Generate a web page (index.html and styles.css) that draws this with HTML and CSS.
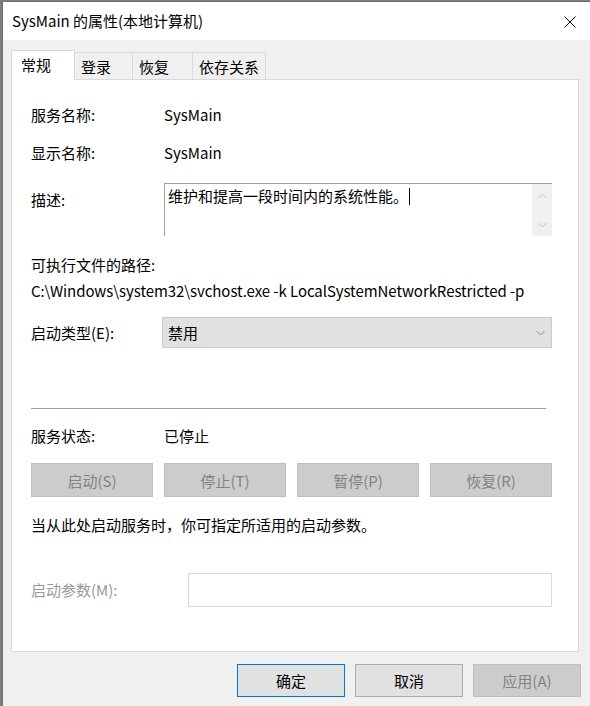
FILE: index.html
```html
<!DOCTYPE html>
<html lang="zh-CN">
<head>
  <meta charset="UTF-8">
  <title>SysMain 的属性(本地计算机)</title>
  <link rel="stylesheet" href="styles.css">
</head>
<body>
  <div class="window">
    <div class="titlebar">
      <span class="title">SysMain 的属性(本地计算机)</span>
      <svg class="close" width="12" height="12" viewBox="0 0 12 12">
        <path d="M0.5 0.5 L11.5 11.5 M11.5 0.5 L0.5 11.5" stroke="#000" stroke-width="1" fill="none"/>
      </svg>
    </div>

    <div class="content">
      <div class="tabs">
        <div class="tab active">常规</div>
        <div class="tab t2">登录</div>
        <div class="tab t3">恢复</div>
        <div class="tab t4">依存关系</div>
      </div>

      <div class="panel">
        <div class="row">
          <span class="label">服务名称:</span>
          <span>SysMain</span>
        </div>
        <div class="row r-display">
          <span class="label">显示名称:</span>
          <span>SysMain</span>
        </div>
        <div class="row r-desc">
          <span class="label desc-label">描述:</span>
          <div class="textbox">
            <div class="textbox-text">维护和提高一段时间内的系统性能。<span class="caret"></span></div>
            <div class="scroll">
              <svg width="9" height="6" viewBox="0 0 9 6"><path d="M0.5 5 L4.5 1 L8.5 5" stroke="#c2c2c2" fill="none"/></svg>
              <svg width="9" height="6" viewBox="0 0 9 6"><path d="M0.5 1 L4.5 5 L8.5 1" stroke="#c2c2c2" fill="none"/></svg>
            </div>
          </div>
        </div>
        <div class="row r-path-label">可执行文件的路径:</div>
        <div class="row r-path">C:\Windows\system32\svchost.exe -k LocalSystemNetworkRestricted -p</div>
        <div class="row r-type">
          <span class="label label-type">启动类型(E):</span>
          <div class="combo">
            <span>禁用</span>
            <svg width="9" height="6" viewBox="0 0 9 6"><path d="M0.5 1 L4.5 5 L8.5 1" stroke="#8a8a8a" fill="none"/></svg>
          </div>
        </div>

        <div class="separator"></div>

        <div class="row r-status">
          <span class="label">服务状态:</span>
          <span>已停止</span>
        </div>
        <div class="svc-buttons">
          <div class="btn disabled">启动(S)</div>
          <div class="btn disabled">停止(T)</div>
          <div class="btn disabled">暂停(P)</div>
          <div class="btn disabled">恢复(R)</div>
        </div>
        <div class="row r-hint">当从此处启动服务时，你可指定所适用的启动参数。</div>
        <div class="row r-params">
          <span class="label label-params">启动参数(M):</span>
          <div class="param-input"></div>
        </div>
      </div>

      <div class="actions">
        <div class="btn default">确定</div>
        <div class="btn">取消</div>
        <div class="btn disabled">应用(A)</div>
      </div>
    </div>
  </div>
</body>
</html>
```

FILE: styles.css
```css
html, body {
  margin: 0;
  height: 100%;
}
body {
  background: #7d7d7d;
  font-family: "Noto Sans CJK SC", "Open Sans", sans-serif;
  font-size: 15px;
  color: #000;
  overflow: hidden;
}
.window {
  margin: 1px 0 0 2px;
  border-left: 1px solid #6f6f6f;
  border-top: 1px solid #6f6f6f;
  height: 100%;
  background: #f0f0f0;
}

/* title bar */
.titlebar {
  height: 38px;
  background: #fff;
  display: flex;
  align-items: center;
  justify-content: space-between;
  padding: 0 14px 0 9px;
}
.title {
  font-size: 15px;
  line-height: 20px;
}
.close {
  display: block;
  margin-top: 1px;
}

/* dialog body */
.content {
  padding: 10px 11px 0 8px;
}
.tabs {
  display: flex;
  align-items: flex-end;
  height: 29px;
}
.tab {
  box-sizing: border-box;
  height: 27px;
  line-height: 28px;
  padding-left: 6px;
  border: 1px solid #d9d9d9;
  border-bottom: none;
  background: #f0f0f0;
  margin-left: -1px;
}
.tab.active {
  height: 30px;
  width: 64px;
  padding-left: 9px;
  line-height: 27px;
  background: #fff;
  margin-left: 0;
  margin-bottom: -1px;
  position: relative;
  z-index: 1;
}
.tab.t2 { width: 59px; }
.tab.t3 { width: 61px; }
.tab.t4 { width: 74px; }

.panel {
  background: #fff;
  border: 1px solid #d9d9d9;
  padding: 25px 26px 44px 19px;
}
.row {
  display: flex;
  align-items: center;
  line-height: 20px;
  min-height: 20px;
}
.label {
  width: 133px;
  flex-shrink: 0;
}
.r-display { margin-top: 18px; }

.r-desc {
  margin-top: 20px;
  align-items: flex-start;
}
.desc-label { margin-top: 7px; }
.textbox {
  flex: 1;
  height: 53px;
  box-sizing: border-box;
  border-top: 1px solid #a0a0a0;
  border-left: 1px solid #a0a0a0;
  display: flex;
  justify-content: space-between;
}
.textbox-text {
  padding: 2px 0 0 3px;
  display: flex;
  align-items: center;
  height: 20px;
}
.caret {
  display: inline-block;
  width: 1px;
  height: 17px;
  background: #000;
  margin-left: 1px;
}
.scroll {
  width: 20px;
  background: #f0f0f0;
  display: flex;
  flex-direction: column;
  align-items: center;
  justify-content: space-between;
  padding: 9px 0 8px;
  box-sizing: border-box;
}
.scroll svg { display: block; }

.r-path-label { margin-top: 19px; }
.r-path {
  margin-top: 6px;
  letter-spacing: -0.07px;
}

.r-type { margin-top: 16px; }
.label-type { width: 131px; }
.combo {
  flex: 1;
  box-sizing: border-box;
  height: 31px;
  background: #e1e1e1;
  border: 1px solid #cccccc;
  display: flex;
  align-items: center;
  justify-content: space-between;
  padding: 0 6px 0 5px;
}
.combo svg { display: block; }

.separator {
  margin: 60px 6px 0 0;
  height: 1px;
  background: #a0a0a0;
}

.r-status { margin-top: 17px; }

.svc-buttons {
  margin-top: 17px;
  display: grid;
  grid-template-columns: repeat(4, 1fr);
  gap: 11px;
}
.btn {
  box-sizing: border-box;
  height: 34px;
  background: #e1e1e1;
  border: 1px solid #adadad;
  display: flex;
  align-items: center;
  justify-content: center;
}
.btn.disabled {
  background: #cccccc;
  border-color: #bfbfbf;
  color: #838383;
}
.btn.default {
  border: 1px solid #0078d7;
}

.r-hint { margin-top: 18px; }

.r-params { margin-top: 38px; }
.label-params {
  width: 157px;
  color: #9a9a9a;
}
.param-input {
  flex: 1;
  height: 34px;
  box-sizing: border-box;
  border: 1px solid #d9d9d9;
}

.actions {
  margin-top: 12px;
  margin-right: -2px;
  display: flex;
  justify-content: flex-end;
  gap: 10px;
}
.actions .btn {
  width: 108px;
  height: 33px;
}
```
